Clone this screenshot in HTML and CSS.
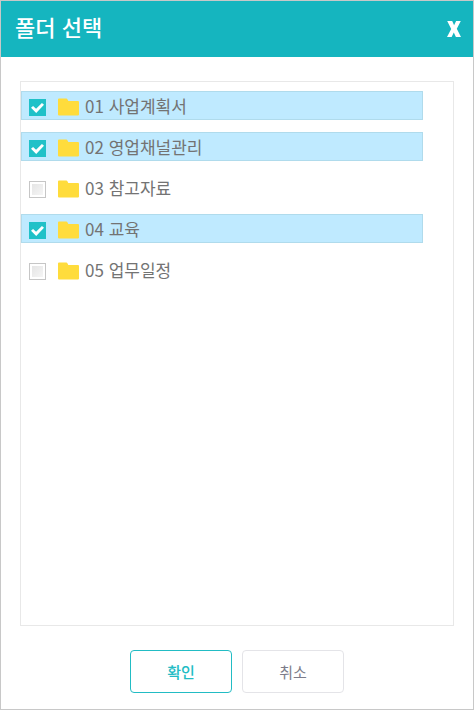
FILE: index.html
```html
<!DOCTYPE html>
<html lang="ko">
<head>
    <meta charset="UTF-8">
    <meta name="viewport" content="width=device-width, initial-scale=1.0">
    <title>폴더 선택</title>
    <link rel="stylesheet" href="styles.css">
</head>
<body>
    <svg class="icon-defs" aria-hidden="true">
        <symbol id="folder" viewBox="0 0 21 18">
            <path d="M0 1.5Q0 .5 1 .5H8.3Q9 .5 9.4 1.2L10.3 3H20Q21 3 21 4V16.5Q21 17.5 20 17.5H1Q0 17.5 0 16.5Z"/>
        </symbol>
    </svg>

    <form class="dialog">
        <header class="dialog-header">
            <h1 class="dialog-title">폴더 선택</h1>
            <button type="button" class="close-btn" aria-label="닫기">
                <svg viewBox="0 0 14 16" width="14" height="16">
                    <path d="M.2 0H5.2L7.1 4.2L9.1 0H13.8L9.8 7.7L14 16H8.9L6.8 11.4L4.6 16H0L4.2 8Z"/>
                </svg>
            </button>
        </header>

        <ul class="folder-list">
            <li>
                <label class="folder-row">
                    <input type="checkbox" class="folder-check" checked>
                    <svg class="folder-icon"><use href="#folder"/></svg>
                    <span>01 사업계획서</span>
                </label>
            </li>
            <li>
                <label class="folder-row">
                    <input type="checkbox" class="folder-check" checked>
                    <svg class="folder-icon"><use href="#folder"/></svg>
                    <span>02 영업채널관리</span>
                </label>
            </li>
            <li>
                <label class="folder-row">
                    <input type="checkbox" class="folder-check">
                    <svg class="folder-icon"><use href="#folder"/></svg>
                    <span>03 참고자료</span>
                </label>
            </li>
            <li>
                <label class="folder-row">
                    <input type="checkbox" class="folder-check" checked>
                    <svg class="folder-icon"><use href="#folder"/></svg>
                    <span>04 교육</span>
                </label>
            </li>
            <li>
                <label class="folder-row">
                    <input type="checkbox" class="folder-check">
                    <svg class="folder-icon"><use href="#folder"/></svg>
                    <span>05 업무일정</span>
                </label>
            </li>
        </ul>

        <footer class="dialog-footer">
            <button type="submit" class="btn btn-primary">확인</button>
            <button type="button" class="btn">취소</button>
        </footer>
    </form>
</body>
</html>
```
FILE: styles.css
```css
:root {
    --teal: #15b5bf;
    --check-teal: #20c1c8;
    --selected: #bfeaff;
    --selected-border: #b0dbec;
    --folder: #ffdc3c;
    --line: #e8e8e8;
    --text: #737373;
}

* {
    box-sizing: border-box;
}

body {
    margin: 0;
    background: #fff;
    color: var(--text);
    font-family: "Noto Sans CJK KR", sans-serif;
}

.icon-defs {
    display: none;
}

.dialog {
    display: flex;
    flex-direction: column;
    min-height: 100vh;
    border: 1px solid #c8c8c8;
}

.dialog-header {
    display: flex;
    justify-content: space-between;
    align-items: center;
    height: 56px;
    padding: 0 12px 0 14px;
    background: var(--teal);
    color: #fff;
}

.dialog-title {
    margin: 0;
    padding-bottom: 6px;
    font-size: 22px;
    font-weight: 500;
    line-height: 32px;
}

.close-btn {
    display: flex;
    padding: 0;
    border: 0;
    background: none;
    cursor: pointer;
}

.close-btn svg {
    fill: #fff;
}

.folder-list {
    display: flex;
    flex: 1;
    flex-direction: column;
    gap: 12px;
    margin: 24px 19px;
    padding: 9px 30px 9px 0;
    border: 1px solid var(--line);
    list-style: none;
}

.folder-row {
    display: flex;
    align-items: center;
    height: 29px;
    padding: 0 7px;
    border: 1px solid transparent;
    font-size: 17px;
    line-height: 24px;
    cursor: pointer;
}

.folder-row:has(:checked) {
    background: var(--selected);
    border-color: var(--selected-border);
}

.folder-check {
    appearance: none;
    width: 17px;
    height: 17px;
    margin: 4px 12px 0 0;
    border: 1px solid #c6c6c6;
    background: linear-gradient(135deg, #e2e2e2, #f8f8f8);
    box-shadow: inset 0 0 0 2px #fff;
    cursor: pointer;
}

.folder-check:checked {
    border-color: var(--check-teal);
    background: var(--check-teal);
    box-shadow: none;
}

/* tick */
.folder-check:checked::before {
    content: "";
    display: block;
    width: 13px;
    height: 10px;
    margin: 3px 1px;
    background: #fff;
    clip-path: polygon(0 48%, 16% 30%, 39% 58%, 84% 0, 100% 18%, 40% 100%);
}

.folder-icon {
    width: 21px;
    height: 18px;
    margin: 2px 6px 0 0;
    fill: var(--folder);
}

.dialog-footer {
    display: flex;
    justify-content: center;
    gap: 10px;
    padding-bottom: 16px;
}

.btn {
    width: 102px;
    height: 43px;
    padding: 0;
    border: 1px solid #e4e4e8;
    border-radius: 4px;
    background: #fff;
    color: #7c7c8a;
    font-family: inherit;
    font-size: 15px;
    line-height: 22px;
    cursor: pointer;
}

.btn-primary {
    border-color: #22bcc4;
    color: #22bcc4;
    font-weight: 500;
}
```
